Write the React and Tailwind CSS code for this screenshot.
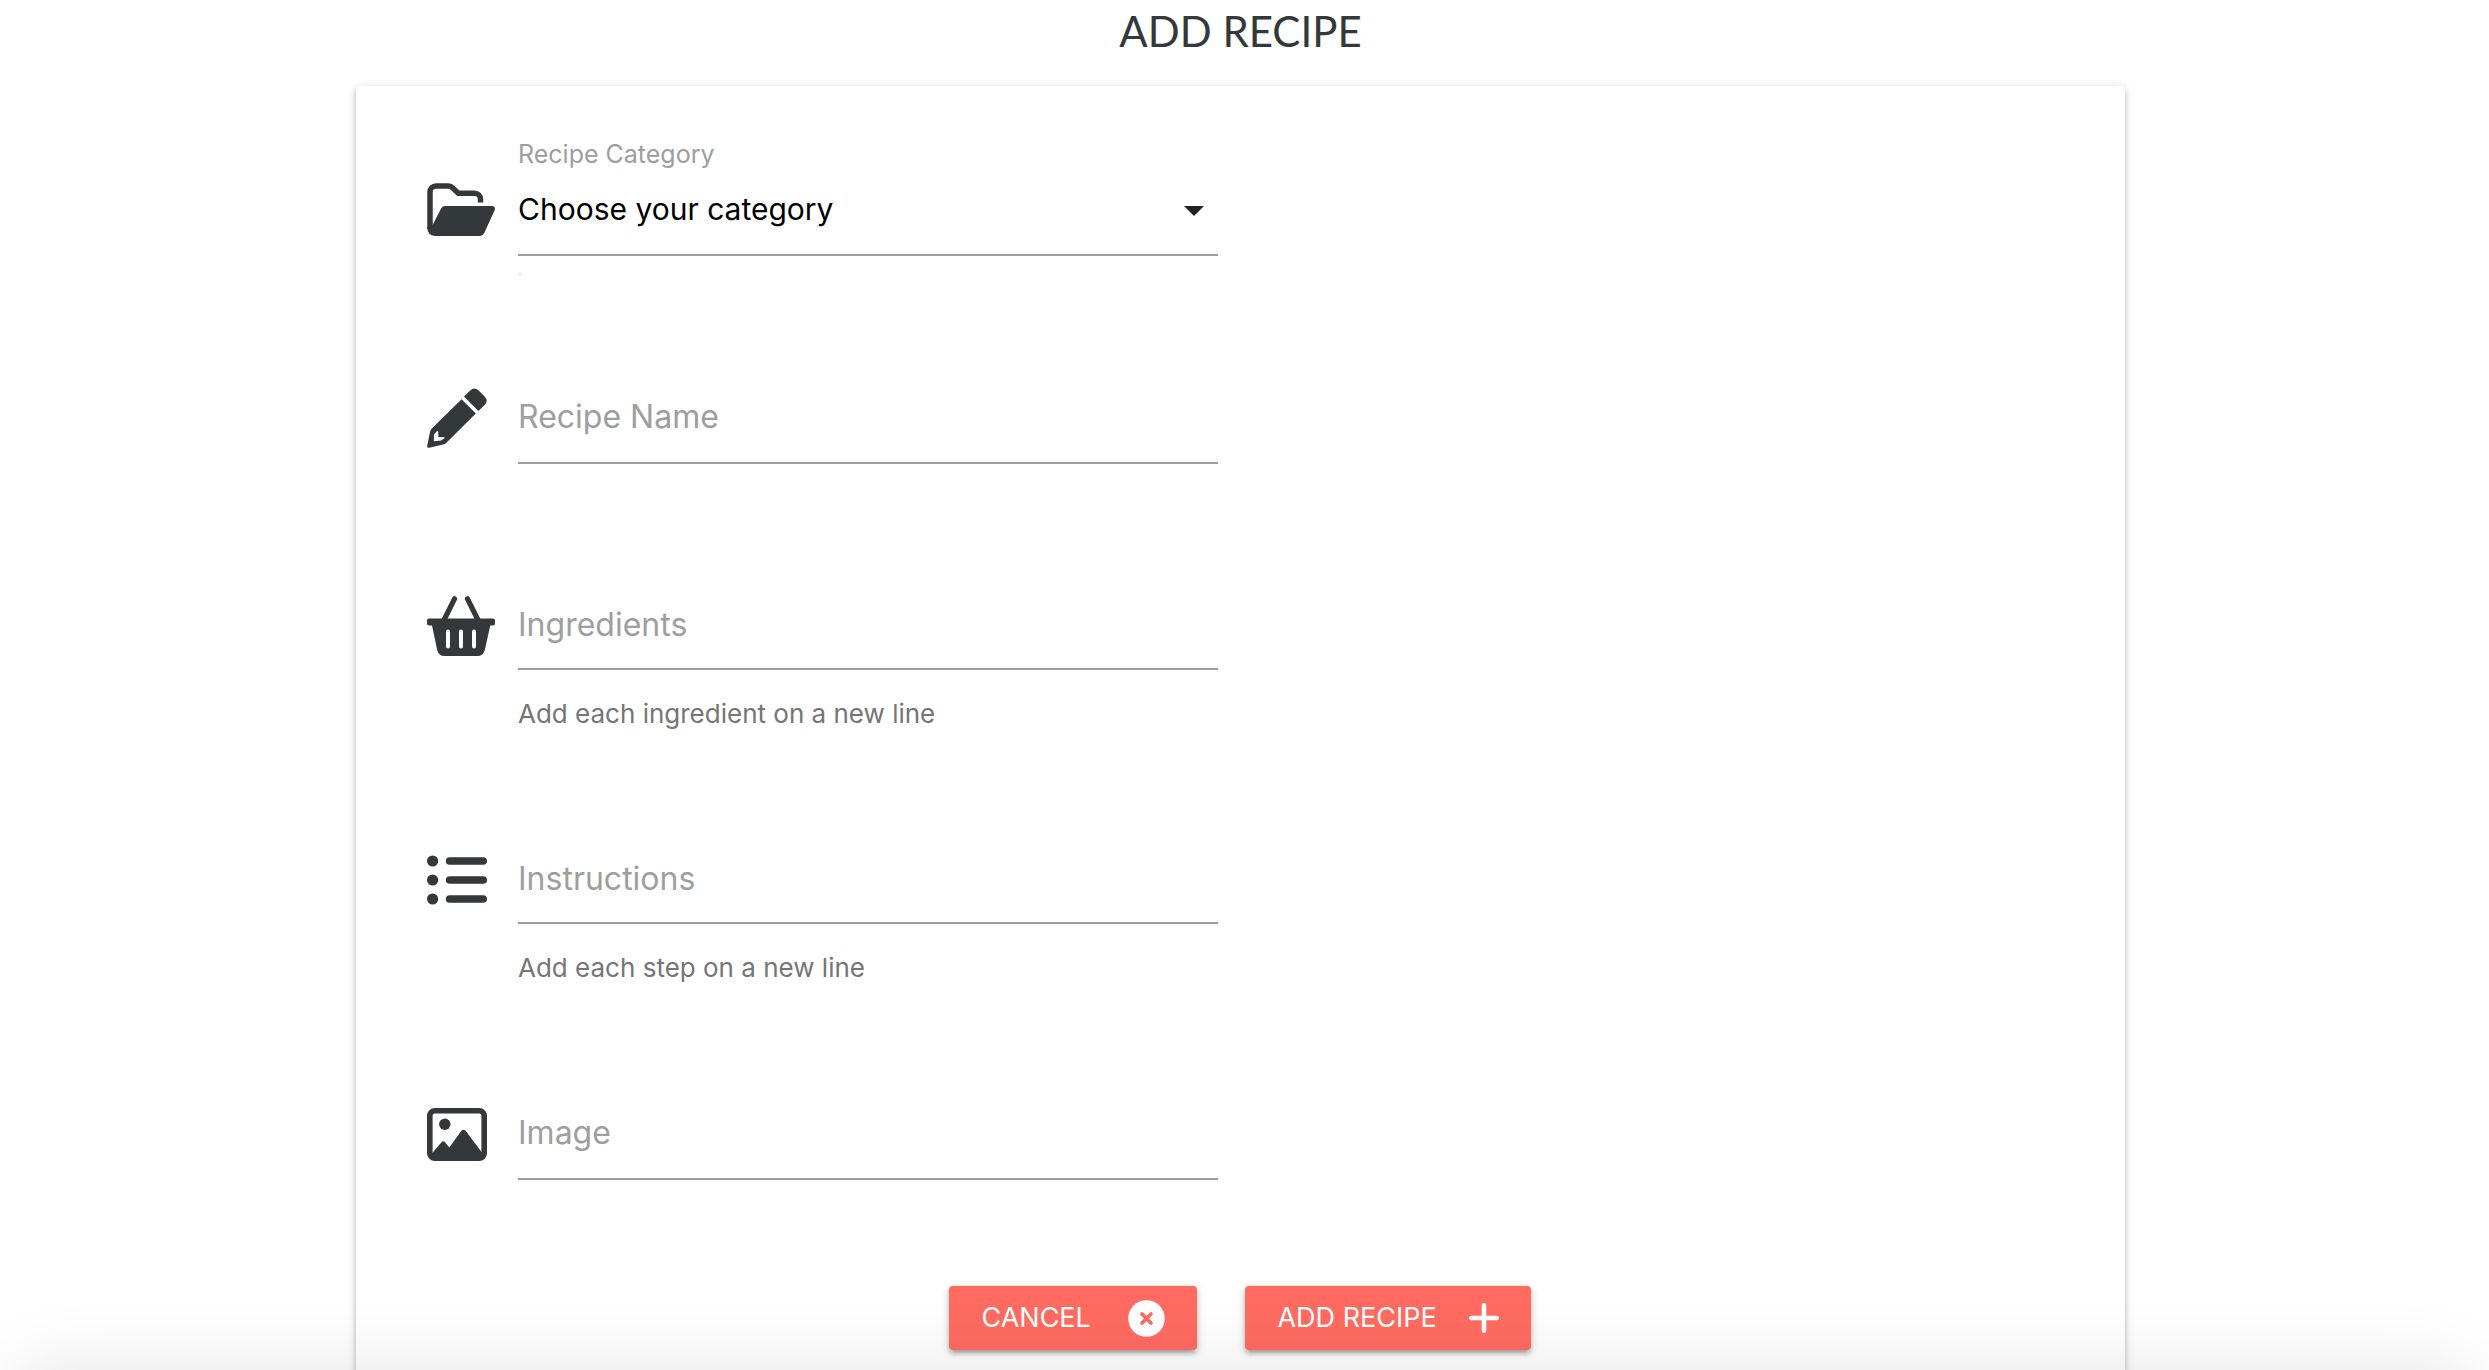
import React from "react";

const FolderIcon = () => (
  <svg width="68" height="54" viewBox="0 0 68 54" fill="none" aria-hidden="true">
    <path
      d="M3 46V9a6 6 0 0 1 6-6h12.500a6 6 0 0 1 4.200 1.800l5.600 5.500H47.500a6 6 0 0 1 6 6V19.500"
      stroke="currentColor"
      strokeWidth="5.500"
    />
    <path
      d="M.3 44 L5.600 42 14.200 25.200 Q15.500 23 18 23 H65 Q69 23.400 67.500 27.500 L57.500 49.500 Q55.800 53 52 53 H8 Q.3 52.500 .3 44Z"
      fill="currentColor"
    />
  </svg>
);

const PencilIcon = () => (
  <svg width="60" height="60" viewBox="0 0 60 60" fill="currentColor" aria-hidden="true">
    <path d="M37 8.600 43.200 2.400 Q47.400 -1.600 51.600 2.400 L57.600 8.400 Q61.800 12.800 57.600 17 L51.400 23Z" />
    <path
      fillRule="evenodd"
      d="M34.600 11.200 48.800 25.400 19.400 54.800 Q18 56.200 16 56.600 L2.200 59.800 Q-.3 60.200 .2 57.800 L3 44 Q3.400 41.800 4.800 40.400Z M9.800 43.200 L7 46.400 6.800 53.200 14.200 52.600 17.800 50 17.300 49.200 11.400 49 11.200 43.200Z"
    />
  </svg>
);

const BasketIcon = () => (
  <svg width="68" height="60" viewBox="0 0 68 60" fill="none" aria-hidden="true">
    <path d="M27.500 2.800 16.500 25M40.500 2.800 51.500 25" stroke="currentColor" strokeWidth="5.200" strokeLinecap="round" />
    <path
      fill="currentColor"
      d="M2 22.500H66Q68 22.500 68 24.500V27.500Q68 29.600 66 29.600H63.300L57.800 54Q56.200 60 50.500 60H17.500Q11.800 60 10.200 54L5 29.600H2Q0 29.600 0 27.500V24.500Q0 22.500 2 22.500Z"
    />
    <path d="M21 35.500V50.500M34 35.500V50.500M47 35.500V50.500" stroke="white" strokeWidth="4" strokeLinecap="round" />
  </svg>
);

const ListIcon = () => (
  <svg width="60" height="50" viewBox="0 0 60 50" fill="currentColor" aria-hidden="true">
    <circle cx="5.600" cy="6" r="5.600" />
    <circle cx="5.600" cy="25" r="5.600" />
    <circle cx="5.600" cy="44" r="5.600" />
    <rect x="18.800" y="2.200" width="41.200" height="7.600" rx="3.800" />
    <rect x="18.800" y="21.200" width="41.200" height="7.600" rx="3.800" />
    <rect x="18.800" y="40.200" width="41.200" height="7.600" rx="3.800" />
  </svg>
);

const ImageIcon = () => (
  <svg width="60" height="53" viewBox="0 0 60 53" fill="currentColor" aria-hidden="true">
    <rect x="2.800" y="2.800" width="54.400" height="47.400" rx="5" fill="none" stroke="currentColor" strokeWidth="5.600" />
    <circle cx="17.800" cy="16.200" r="5.700" />
    <path d="M4 46.500 14.500 34.200Q16.300 32.200 18 34.200L22.300 39.500 34.200 23Q36.500 20.400 38.800 23L56 46V50H4Z" />
  </svg>
);

const CancelIcon = () => (
  <svg width="37" height="37" viewBox="0 0 37 37" aria-hidden="true">
    <circle cx="18.500" cy="18.500" r="18.300" fill="white" />
    <path d="M14 14 23 23M23 14 14 23" stroke="#fc6b61" strokeWidth="3.600" strokeLinecap="round" />
  </svg>
);

const PlusIcon = () => (
  <svg width="30" height="30" viewBox="0 0 30 30" aria-hidden="true">
    <path d="M15 2.300V27.700M2.300 15H27.700" stroke="white" strokeWidth="4.600" strokeLinecap="round" />
  </svg>
);

const control =
  "block w-full border-b-2 border-[#9e9e9e] bg-transparent text-[30px] outline-none focus:border-[#ff6b61]";

function Field({ id, icon, label, help, multiline }) {
  return (
    <div className="flex">
      <div className="flex h-24 w-[91px] shrink-0 items-center pt-1">{icon}</div>
      <div className="relative grow">
        {multiline ? (
          <textarea id={id} rows={1} placeholder=" " className={`${control} peer h-[94px] resize-none pt-6`} />
        ) : (
          <input id={id} type="text" placeholder=" " className={`${control} peer h-24`} />
        )}
        <label
          htmlFor={id}
          className="pointer-events-none absolute top-6 left-0 text-[32px] leading-[50px] text-[#9e9e9e] peer-[:not(:placeholder-shown)]:-top-5 peer-[:not(:placeholder-shown)]:text-[25px]"
        >
          {label}
        </label>
        {help && <p className="h-12 pt-6 text-[26px] leading-10 text-[#757575]">{help}</p>}
      </div>
    </div>
  );
}

const button =
  "flex h-16 items-center justify-between rounded bg-[#ff6b61] px-8 text-[27px] text-white shadow-[0_4px_4px_rgba(0,0,0,0.14),0_6px_2px_-4px_rgba(0,0,0,0.12),0_2px_10px_rgba(0,0,0,0.2)]";

export default function App() {
  return (
    <div className="min-h-screen bg-white pr-2 font-['Inter',sans-serif] text-[#33383b]">
      <h1 className="mb-6 text-center font-['Lato',sans-serif] text-[42px] leading-[62px]">ADD RECIPE</h1>

      <main className="mx-auto w-[71.3%] rounded bg-white px-[71px] pt-[74px] pb-20 shadow-[0_4px_4px_rgba(0,0,0,0.14),0_6px_2px_-4px_rgba(0,0,0,0.12),0_2px_10px_rgba(0,0,0,0.2)]">
        <form onSubmit={(e) => e.preventDefault()}>
          <div className="grid grid-cols-2 gap-11">
            <div className="flex flex-col gap-28">
              <div className="flex">
                <div className="flex h-24 w-[91px] shrink-0 items-center pt-1">
                  <FolderIcon />
                </div>
                <div className="relative grow">
                  <label htmlFor="category" className="absolute -top-[22px] left-0 text-[25px] leading-8 text-[#9e9e9e]">
                    Recipe Category
                  </label>
                  <select id="category" defaultValue="" className={`${control} h-24 appearance-none pt-1 pr-12 text-black`}>
                    <option value="">Choose your category</option>
                  </select>
                  <svg
                    width="20"
                    height="10"
                    viewBox="0 0 20 10"
                    aria-hidden="true"
                    className="pointer-events-none absolute top-[46px] right-3.5"
                  >
                    <path d="M0 0H20L10 10Z" fill="#212121" />
                  </svg>
                  <span className="absolute top-28 left-0 size-1 rounded-full bg-[#eeeeee]" />
                </div>
              </div>
              <Field id="name" icon={<PencilIcon />} label="Recipe Name" />
              <Field
                id="ingredients"
                icon={<BasketIcon />}
                label="Ingredients"
                help="Add each ingredient on a new line"
                multiline
              />
              <Field
                id="instructions"
                icon={<ListIcon />}
                label="Instructions"
                help="Add each step on a new line"
                multiline
              />
              <Field id="image" icon={<ImageIcon />} label="Image" />
            </div>
          </div>

          <div className="mt-[106px] flex justify-center gap-12">
            <button type="button" className={`${button} min-w-[248px]`}>
              CANCEL
              <CancelIcon />
            </button>
            <button type="submit" className={`${button} min-w-[286px]`}>
              ADD RECIPE
              <PlusIcon />
            </button>
          </div>
        </form>
      </main>

      <div className="pointer-events-none fixed top-full right-5 left-5 h-24 shadow-[0_0_76px_rgba(0,0,0,0.11)]" />
    </div>
  );
}
